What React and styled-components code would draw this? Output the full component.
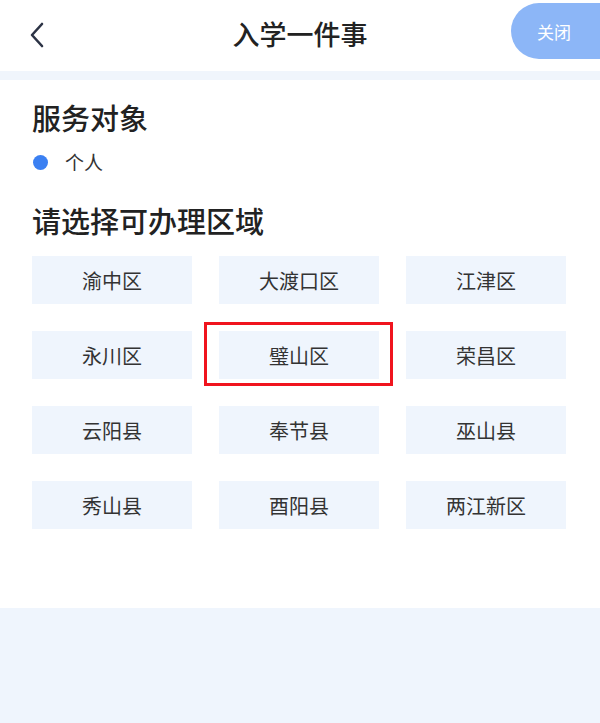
import React from 'react';
import styled, { createGlobalStyle } from 'styled-components';

const GlobalStyle = createGlobalStyle`
  html, body {
    margin: 0;
    padding: 0;
    background: #eff5fd;
    font-family: "Noto Sans CJK SC", "Noto Sans", sans-serif;
  }
`;

const Page = styled.div`
  width: 600px;
  min-height: 723px;
  background: #eff5fd;
`;

const Header = styled.header`
  height: 71px;
  display: flex;
  align-items: center;
  justify-content: center;
  position: relative;
  background: #fff;
`;

const BackButton = styled.button`
  position: absolute;
  left: 23px;
  top: 21px;
  width: 28px;
  height: 28px;
  padding: 0;
  border: 0;
  background: none;
  display: flex;
  align-items: center;
  justify-content: center;
`;

const Title = styled.h1`
  margin: 0;
  margin-top: -5px;
  font-size: 27px;
  font-weight: 500;
  color: #222;
`;

const CloseButton = styled.button`
  position: absolute;
  right: 0;
  top: 3px;
  width: 89px;
  height: 56px;
  border: 0;
  border-radius: 28px 0 0 28px;
  background: #8cb6f7;
  color: #fff;
  font-family: inherit;
  font-size: 17px;
  text-align: left;
  padding: 0 0 0 26px;
`;

const Divider = styled.div`
  height: 9px;
  background: #f0f5fc;
`;

const Content = styled.main`
  background: #fff;
  height: 528px;
  padding: 20px 32px 0;
  box-sizing: border-box;
`;

const SectionTitle = styled.h2`
  margin: 0;
  font-size: 29px;
  line-height: 34px;
  font-weight: 500;
  color: #222;
`;

const Option = styled.div`
  display: flex;
  align-items: center;
  gap: 17px;
  margin: 15px 0 28px 1px;
  font-size: 19px;
  line-height: 26px;
  color: #333;
`;

const Dot = styled.span`
  width: 15px;
  height: 15px;
  border-radius: 50%;
  background: #3b80f2;
`;

const Grid = styled.div`
  display: grid;
  grid-template-columns: repeat(3, 160px);
  column-gap: 27px;
  row-gap: 27px;
  margin-top: 19px;
`;

const CellWrap = styled.div`
  position: relative;
`;

const Cell = styled.div`
  height: 48px;
  display: flex;
  align-items: center;
  justify-content: center;
  background: #eff5fd;
  font-size: 20px;
  color: #333;
`;

const Highlight = styled.div`
  position: absolute;
  left: -15px;
  right: -14px;
  top: -9px;
  bottom: -7px;
  border: 3px solid #f0141e;
  pointer-events: none;
`;

const areas = [
  '渝中区', '大渡口区', '江津区',
  '永川区', '璧山区', '荣昌区',
  '云阳县', '奉节县', '巫山县',
  '秀山县', '酉阳县', '两江新区',
];

const App = () => (
  <Page>
    <GlobalStyle />
    <Header>
      <BackButton aria-label="返回">
        <svg width="20" height="26" viewBox="0 0 20 26">
          <path d="M15 2 L5 13 L15 24" fill="none" stroke="#2c3345" strokeWidth="2.6" strokeLinecap="round" strokeLinejoin="round" />
        </svg>
      </BackButton>
      <Title>入学一件事</Title>
      <CloseButton>关闭</CloseButton>
    </Header>
    <Divider />
    <Content>
      <SectionTitle>服务对象</SectionTitle>
      <Option>
        <Dot />
        个人
      </Option>
      <SectionTitle>请选择可办理区域</SectionTitle>
      <Grid>
        {areas.map((name) => (
          <CellWrap key={name}>
            <Cell>{name}</Cell>
            {name === '璧山区' && <Highlight />}
          </CellWrap>
        ))}
      </Grid>
    </Content>
  </Page>
);

export default App;
